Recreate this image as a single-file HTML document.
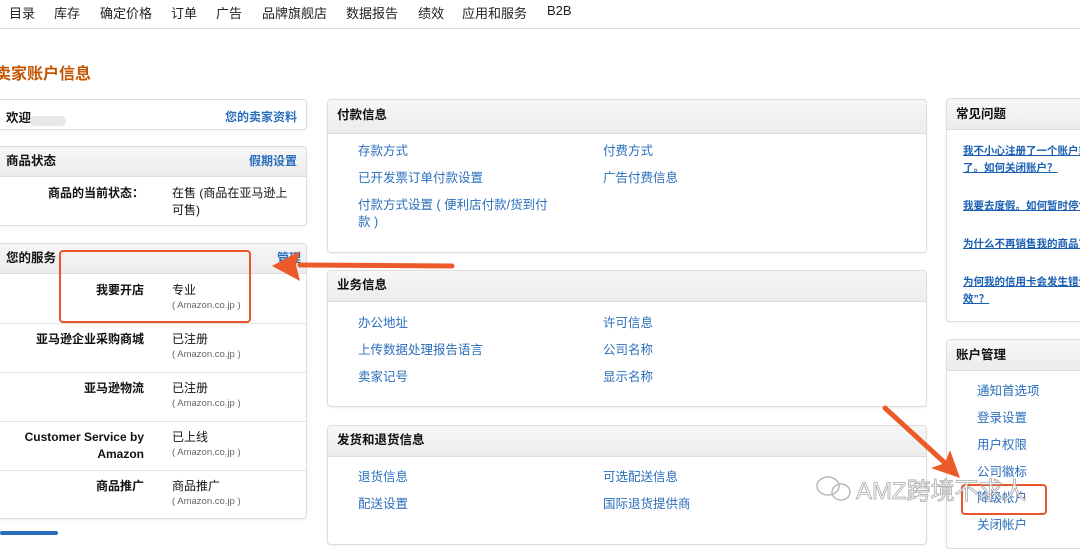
<!DOCTYPE html>
<html><head><meta charset="utf-8"><style>
*{box-sizing:border-box;margin:0;padding:0}
body{width:1080px;height:535px;overflow:hidden;background:#fff;font-family:"Liberation Sans","Noto Sans CJK SC",sans-serif;font-size:13px;color:#111;position:relative}
.a{position:absolute}
.nav{position:absolute;left:0;top:0;width:1080px;height:29px;border-bottom:1px solid #ddd}
.nav span{position:absolute;top:3px;font-size:13px;color:#222}
.box{position:absolute;border:1px solid #ddd;border-radius:4px;background:#fff;box-shadow:0 1px 2px rgba(0,0,0,.06)}
.hd{position:absolute;left:0;right:0;top:0;background:linear-gradient(#f7f7f7,#ececec);border-bottom:1px solid #ddd;font-weight:bold;font-size:12.5px;padding-left:9px;border-radius:4px 4px 0 0}
.lk{position:absolute;color:#2a6ebb;font-size:12.5px;line-height:17px}
.hl{position:absolute;color:#2a6ebb;font-weight:bold;font-size:12px}
.fq{position:absolute;color:#1a5fb4;font-weight:bold;font-size:10.5px;text-decoration:underline;line-height:17px;white-space:nowrap}
.lab{position:absolute;right:162px;text-align:right;font-weight:bold;font-size:12px;line-height:17px}
.val{position:absolute;left:171px;font-size:12px;line-height:17px}
.sm{position:absolute;left:171px;font-size:9.5px;color:#666}
.row{position:absolute;left:0;right:0;border-top:1px solid #e4e4e4}
</style></head><body>
<div class="nav">
<span style="left:9px">目录</span><span style="left:54px">库存</span><span style="left:100px">确定价格</span><span style="left:171px">订单</span><span style="left:216px">广告</span><span style="left:262px">品牌旗舰店</span><span style="left:346px">数据报告</span><span style="left:418px">绩效</span><span style="left:462px">应用和服务</span><span style="left:547px">B2B</span>
</div>
<div class="a" style="left:-5px;top:60px;color:#c45500;font-weight:bold;font-size:16px">卖家账户信息</div>

<div class="box" style="left:-5px;top:99px;width:312px;height:31px">
<div class="a" style="left:10px;top:7px;font-weight:bold;font-size:12.5px">欢迎</div>
<div class="a" style="left:34px;top:16px;width:36px;height:10px;background:#e8e8e8;border-radius:5px"></div>
<div class="hl" style="right:9px;top:8px">您的卖家资料</div></div>

<div class="box" style="left:-5px;top:146px;width:312px;height:80px">
<div class="hd" style="height:30px;line-height:29px;padding-left:10px">商品状态<span class="hl" style="right:9px;top:0">假期设置</span></div>
<div class="lab" style="top:38px;right:162px">商品的当前状态：</div>
<div class="val" style="top:38px;left:176px">在售 (商品在亚马逊上<br>可售)</div></div>

<div class="box" style="left:-5px;top:243px;width:312px;height:276px">
<div class="hd" style="height:30px;line-height:29px;padding-left:10px">您的服务<span class="hl" style="right:5px;top:0">管理</span></div>
<div class="lab" style="top:38px">我要开店</div><div class="val" style="top:38px;left:176px">专业</div><div class="sm" style="top:56px;left:176px">( Amazon.co.jp )</div>
<div class="row" style="top:79px"></div>
<div class="lab" style="top:87px">亚马逊企业采购商城</div><div class="val" style="top:87px;left:176px">已注册</div><div class="sm" style="top:105px;left:176px">( Amazon.co.jp )</div>
<div class="row" style="top:128px"></div>
<div class="lab" style="top:136px">亚马逊物流</div><div class="val" style="top:136px;left:176px">已注册</div><div class="sm" style="top:154px;left:176px">( Amazon.co.jp )</div>
<div class="row" style="top:177px"></div>
<div class="lab" style="top:185px">Customer Service by<br>Amazon</div><div class="val" style="top:185px;left:176px">已上线</div><div class="sm" style="top:203px;left:176px">( Amazon.co.jp )</div>
<div class="row" style="top:226px"></div>
<div class="lab" style="top:234px">商品推广</div><div class="val" style="top:234px;left:176px">商品推广</div><div class="sm" style="top:252px;left:176px">( Amazon.co.jp )</div>
</div>
<div class="a" style="left:0;top:531px;width:58px;height:4px;background:#2a6ebb;border-radius:2px"></div>

<div class="box" style="left:327px;top:99px;width:600px;height:154px">
<div class="hd" style="height:34px;line-height:31px">付款信息</div>
<div class="lk" style="left:30px;top:43px">存款方式</div><div class="lk" style="left:275px;top:43px">付费方式</div>
<div class="lk" style="left:30px;top:70px">已开发票订单付款设置</div><div class="lk" style="left:275px;top:70px">广告付费信息</div>
<div class="lk" style="left:30px;top:97px">付款方式设置 ( 便利店付款/货到付<br>款 )</div></div>

<div class="box" style="left:327px;top:270px;width:600px;height:137px">
<div class="hd" style="height:31px;line-height:29px">业务信息</div>
<div class="lk" style="left:30px;top:44px">办公地址</div><div class="lk" style="left:275px;top:44px">许可信息</div>
<div class="lk" style="left:30px;top:71px">上传数据处理报告语言</div><div class="lk" style="left:275px;top:71px">公司名称</div>
<div class="lk" style="left:30px;top:98px">卖家记号</div><div class="lk" style="left:275px;top:98px">显示名称</div></div>

<div class="box" style="left:327px;top:425px;width:600px;height:120px">
<div class="hd" style="height:31px;line-height:29px">发货和退货信息</div>
<div class="lk" style="left:30px;top:43px">退货信息</div><div class="lk" style="left:275px;top:43px">可选配送信息</div>
<div class="lk" style="left:30px;top:70px">配送设置</div><div class="lk" style="left:275px;top:70px">国际退货提供商</div></div>

<div class="box" style="left:946px;top:98px;width:150px;height:224px;overflow:hidden">
<div class="hd" style="height:31px;line-height:30px">常见问题</div>
<div class="fq" style="left:16px;top:44px">我不小心注册了一个账户或<br>了。如何关闭账户？</div>
<div class="fq" style="left:16px;top:99px">我要去度假。如何暂时停售</div>
<div class="fq" style="left:16px;top:137px">为什么不再销售我的商品？</div>
<div class="fq" style="left:16px;top:175px">为何我的信用卡会发生错误<br>效”？</div></div>

<div class="box" style="left:946px;top:339px;width:150px;height:210px">
<div class="hd" style="height:31px;line-height:30px">账户管理</div>
<div class="lk" style="left:30px;top:43px">通知首选项</div>
<div class="lk" style="left:30px;top:70px">登录设置</div>
<div class="lk" style="left:30px;top:97px">用户权限</div>
<div class="lk" style="left:30px;top:124px">公司徽标</div>
<div class="lk" style="left:30px;top:150px">降级帐户</div>
<div class="lk" style="left:30px;top:177px">关闭帐户</div></div>

<div class="a" style="left:59px;top:250px;width:192px;height:73px;border:2.5px solid #e8562a;border-radius:4px"></div>
<div class="a" style="left:961px;top:484px;width:86px;height:31px;border:2.5px solid #e8562a;border-radius:4px"></div>
<svg class="a" style="left:0;top:0" width="1080" height="535">
<path d="M452 266 L300 265" stroke="#ec5a2a" stroke-width="5" stroke-linecap="round"/>
<path d="M272 266 L300 251 L296 265 L300 281 Z" fill="#ec5a2a"/>
<path d="M885 408 L945 463" stroke="#ec5a2a" stroke-width="5" stroke-linecap="round"/>
<path d="M960 478 L931 468 L945 463 L950 450 Z" fill="#ec5a2a"/>
<g fill="none" stroke="#aaa" stroke-width="1.5" opacity=".8"><ellipse cx="828" cy="486" rx="11" ry="9"/><ellipse cx="841" cy="492" rx="9" ry="8"/></g>
<text x="856" y="499" font-family="Liberation Sans,Noto Sans CJK SC,sans-serif" font-size="24" fill="#fff" stroke="#999" stroke-width=".8" opacity=".85">AMZ跨境不求人</text>
</svg>
</body></html>
